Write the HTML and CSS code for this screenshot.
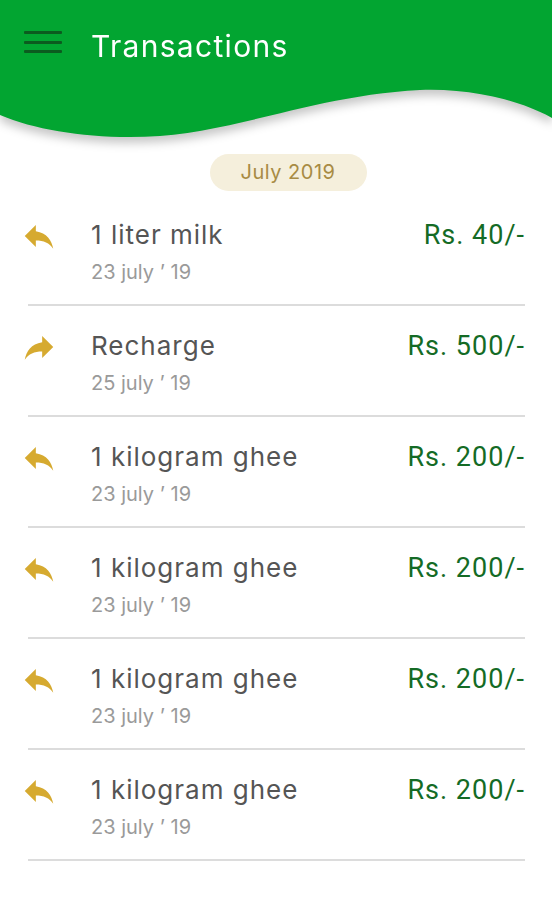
FILE: index.html
```html
<!DOCTYPE html>
<html lang="en">
<head>
    <meta charset="UTF-8">
    <meta name="viewport" content="width=device-width, initial-scale=1.0">
    <title>Transactions</title>
    <link rel="stylesheet" href="styles.css">
</head>
<body>
    <div class="header-wrap">
        <header class="header">
            <button class="menu-btn" aria-label="Menu">
                <span></span><span></span><span></span>
            </button>
            <h1>Transactions</h1>
        </header>
    </div>

    <div class="month">
        <span class="month-pill">July 2019</span>
    </div>

    <ul class="tx-list">
        <li class="tx">
            <svg class="tx-icon" viewBox="0 0 24 24"><path d="M10 9V5l-7 7 7 7v-4.1c5 0 8.5 1.6 11 5.1-1-5-4-10-11-11z"/></svg>
            <div class="tx-info">
                <div class="tx-title">1 liter milk</div>
                <div class="tx-date">23 july ’ 19</div>
            </div>
            <div class="tx-amount">Rs. 40/-</div>
        </li>
        <li class="tx">
            <svg class="tx-icon" viewBox="0 0 24 24"><path d="M14 9V5l7 7-7 7v-4.1c-5 0-8.5 1.6-11 5.1 1-5 4-10 11-11z"/></svg>
            <div class="tx-info">
                <div class="tx-title">Recharge</div>
                <div class="tx-date">25 july ’ 19</div>
            </div>
            <div class="tx-amount">Rs. 500/-</div>
        </li>
        <li class="tx">
            <svg class="tx-icon" viewBox="0 0 24 24"><path d="M10 9V5l-7 7 7 7v-4.1c5 0 8.5 1.6 11 5.1-1-5-4-10-11-11z"/></svg>
            <div class="tx-info">
                <div class="tx-title">1 kilogram ghee</div>
                <div class="tx-date">23 july ’ 19</div>
            </div>
            <div class="tx-amount">Rs. 200/-</div>
        </li>
        <li class="tx">
            <svg class="tx-icon" viewBox="0 0 24 24"><path d="M10 9V5l-7 7 7 7v-4.1c5 0 8.5 1.6 11 5.1-1-5-4-10-11-11z"/></svg>
            <div class="tx-info">
                <div class="tx-title">1 kilogram ghee</div>
                <div class="tx-date">23 july ’ 19</div>
            </div>
            <div class="tx-amount">Rs. 200/-</div>
        </li>
        <li class="tx">
            <svg class="tx-icon" viewBox="0 0 24 24"><path d="M10 9V5l-7 7 7 7v-4.1c5 0 8.5 1.6 11 5.1-1-5-4-10-11-11z"/></svg>
            <div class="tx-info">
                <div class="tx-title">1 kilogram ghee</div>
                <div class="tx-date">23 july ’ 19</div>
            </div>
            <div class="tx-amount">Rs. 200/-</div>
        </li>
        <li class="tx">
            <svg class="tx-icon" viewBox="0 0 24 24"><path d="M10 9V5l-7 7 7 7v-4.1c5 0 8.5 1.6 11 5.1-1-5-4-10-11-11z"/></svg>
            <div class="tx-info">
                <div class="tx-title">1 kilogram ghee</div>
                <div class="tx-date">23 july ’ 19</div>
            </div>
            <div class="tx-amount">Rs. 200/-</div>
        </li>
    </ul>
</body>
</html>
```

FILE: styles.css
```css
body {
    margin: 0;
    background: #fff;
    font-family: Inter, "Noto Sans", sans-serif;
}
.header-wrap {
    filter: drop-shadow(0 6px 5px rgba(0, 0, 0, 0.22));
}
.header {
    height: 140px;
    background: #02a531;
    clip-path: path('M0 0 H552 V118 C520 100 470 88 420 90 C320 95 240 130 160 136 C100 140 40 132 0 115 Z');
    display: flex;
    align-items: flex-start;
    padding: 27px 0 0 24px;
    box-sizing: border-box;
}
.menu-btn {
    width: 38px;
    height: 30px;
    padding: 4px 0;
    border: 0;
    background: none;
    display: flex;
    flex-direction: column;
    justify-content: space-between;
}
.menu-btn span {
    display: block;
    height: 3px;
    background: #0b5c1f;
    border-radius: 1px;
}
.header h1 {
    margin: 0 0 0 29px;
    color: #fff;
    font-size: 30px;
    font-weight: 400;
    line-height: 38px;
    letter-spacing: 1.3px;
}
.month {
    display: flex;
    justify-content: center;
    margin-top: 14px;
    padding-left: 24px;
}
.month-pill {
    width: 157px;
    height: 37px;
    line-height: 37px;
    text-align: center;
    border-radius: 19px;
    background: #f5efdc;
    color: #a88b44;
    font-size: 20px;
    letter-spacing: 0.5px;
}
.tx-list {
    list-style: none;
    margin: 4px 27px 0 28px;
    padding: 0;
}
.tx {
    display: flex;
    align-items: flex-start;
    padding: 22px 0 13px;
    border-bottom: 2px solid #dcdcdc;
}
.tx-icon {
    width: 38px;
    height: 38px;
    margin: 0 33px 0 -8px;
    fill: #d6aa30;
    flex-shrink: 0;
}
.tx-info {
    flex: 1;
}
.tx-title {
    font-size: 26px;
    line-height: 36px;
    letter-spacing: 1px;
    color: #555;
}
.tx-date {
    font-size: 20px;
    line-height: 38px;
    color: #9a9a9a;
}
.tx-amount {
    font-family: Roboto, sans-serif;
    font-size: 27px;
    line-height: 36px;
    letter-spacing: 1px;
    color: #146b25;
}
```
